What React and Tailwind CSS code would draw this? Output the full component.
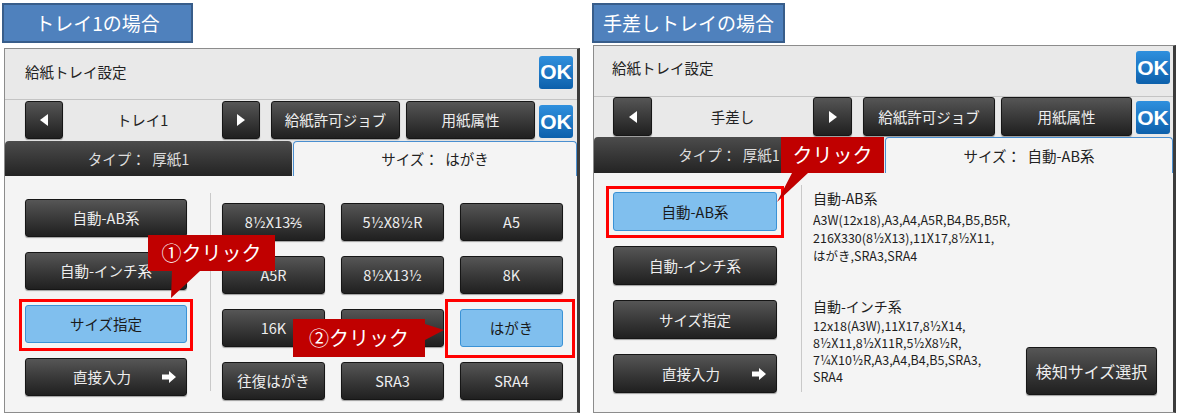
import React from "react";

const dark =
  "flex items-center justify-center rounded-[3px] border border-[#161616] bg-linear-to-b from-[#565656] to-[#202020] text-[#eeeeee] shadow-[0_1px_1px_rgba(0,0,0,0.35)]";
const picked =
  "flex items-center justify-center rounded-[3px] border border-[#3a92d6] bg-[#80bfee] text-[#1a1a1a]";
const okBtn =
  "flex items-center justify-center rounded-[3px] bg-linear-to-b from-[#2f90de] to-[#0c60ab] font-['Liberation_Sans',sans-serif] text-[21px] font-bold text-white";
const label =
  "flex h-[40px] items-center justify-center border-2 border-[#385d8a] bg-[#4f81bd] text-[19px] text-white";

const Tri = ({ dir }) => (
  <svg width="8" height="12" viewBox="0 0 8 12">
    <polygon points={dir === "l" ? "8,0 8,12 0,6" : "0,0 0,12 8,6"} fill="#ffffff" />
  </svg>
);

const Arrow = () => (
  <svg width="14" height="12" viewBox="0 0 14 12">
    <polygon points="0,3.5 7,3.5 7,0 14,6 7,12 7,8.5 0,8.5" fill="#ffffff" />
  </svg>
);

const gridItems = [
  "8½X13⅖", "5½X8½R", "A5",
  "A5R", "8½X13½", "8K",
  "16K", "", "はがき",
  "往復はがき", "SRA3", "SRA4",
];

const Callout = ({ className, w, h, points, text, textClass }) => (
  <div className={`absolute ${className}`}>
    <svg width={w} height={h} viewBox={`0 0 ${w} ${h}`} className="absolute left-0 top-0">
      <polygon points={points} fill="#c00000" />
    </svg>
    <span className={`absolute text-[20px] text-white ${textClass}`}>{text}</span>
  </div>
);

const TrayPanel = () => (
  <div className="ml-[2px] mt-[5px] flex h-[365px] w-[576px] flex-col border border-[#8c8c8c] border-r-[3px] border-r-[#3c3c3c] bg-[#e9e9e9]">
    <div className="flex h-[51px] items-center justify-between border-b border-[#c4c4c4] pb-[4px] pl-[20px] pr-[4px]">
      <span className="text-[14.5px] text-[#222]">給紙トレイ設定</span>
      <div className={`${okBtn} h-[33px] w-[34px]`}>OK</div>
    </div>
    <div className="flex h-[41px] items-start pl-[20px] pt-[1px] text-[14.5px]">
      <div className={`${dark} h-[38px] w-[38px]`}><Tri dir="l" /></div>
      <div className="flex h-[38px] w-[159px] items-center justify-center text-[#222]">トレイ1</div>
      <div className={`${dark} h-[38px] w-[38px]`}><Tri dir="r" /></div>
      <div className={`${dark} ml-[11px] h-[38px] w-[129px]`}>給紙許可ジョブ</div>
      <div className={`${dark} ml-[6px] h-[38px] w-[129px]`}>用紙属性</div>
      <div className={`${okBtn} ml-[4px] mt-[4px] h-[33px] w-[34px]`}>OK</div>
    </div>
    <div className="flex h-[35px] items-end text-[14.5px]">
      <div className="flex h-[35px] w-[287px] items-center justify-center rounded-t-[4px] bg-linear-to-b from-[#4c4c4c] to-[#242424] pr-[20px] text-[#dddddd]">
        タイプ：&nbsp;&nbsp;厚紙1
      </div>
      <div className="ml-[1px] flex h-[35px] flex-1 items-center justify-center rounded-t-[4px] border border-b-0 border-[#4a8fd0] bg-[#f4f4f4] text-[#222]">
        サイズ：&nbsp;&nbsp;はがき
      </div>
    </div>
    <div className="flex flex-1 bg-[#f4f4f4] text-[14.5px]">
      <div className="flex flex-col gap-[15px] pl-[20px] pt-[23px]">
        <div className={`${dark} h-[38px] w-[162px]`}>自動-AB系</div>
        <div className={`${dark} h-[38px] w-[162px]`}>自動-インチ系</div>
        <div className={`${picked} h-[38px] w-[162px]`}>サイズ指定</div>
        <div className={`${dark} h-[38px] w-[162px] pl-[16px] pr-[10px]`}>
          <span className="flex-1 text-center">直接入力</span>
          <Arrow />
        </div>
      </div>
      <div className="ml-[23px] mt-[17px] h-[198px] w-px bg-[#c9c9c9]" />
      <div className="ml-[11px] mt-[27px] grid h-fit grid-cols-[103px_103px_103px] gap-x-[16px] gap-y-[15px]">
        {gridItems.map((t, i) => (
          <div key={i} className={`${t === "はがき" ? picked : dark} h-[38px]`}>{t}</div>
        ))}
      </div>
    </div>
  </div>
);

const BypassPanel = () => (
  <div className="ml-[3px] mt-[2px] flex h-[368px] w-[583px] flex-col border border-[#8c8c8c] border-r-[3px] border-r-[#3c3c3c] bg-[#e9e9e9]">
    <div className="flex h-[51px] items-center justify-between border-b border-[#c4c4c4] pb-[7px] pl-[18px] pr-[3px]">
      <span className="text-[14.5px] text-[#222]">給紙トレイ設定</span>
      <div className={`${okBtn} h-[33px] w-[34px]`}>OK</div>
    </div>
    <div className="flex h-[40px] items-start pl-[19px] text-[14.5px]">
      <div className={`${dark} h-[39px] w-[39px]`}><Tri dir="l" /></div>
      <div className="flex h-[39px] w-[161px] items-center justify-center text-[#222]">手差し</div>
      <div className={`${dark} h-[39px] w-[39px]`}><Tri dir="r" /></div>
      <div className={`${dark} ml-[11px] h-[39px] w-[132px]`}>給紙許可ジョブ</div>
      <div className={`${dark} ml-[6px] h-[39px] w-[131px]`}>用紙属性</div>
      <div className={`${okBtn} ml-[4px] mt-[4px] h-[33px] w-[34px]`}>OK</div>
    </div>
    <div className="flex h-[36px] items-end text-[14.5px]">
      <div className="flex h-[36px] w-[290px] items-center justify-center rounded-t-[4px] bg-linear-to-b from-[#4c4c4c] to-[#242424] pr-[20px] text-[#dddddd]">
        タイプ：&nbsp;&nbsp;厚紙1
      </div>
      <div className="ml-[1px] flex h-[36px] flex-1 items-center justify-center rounded-t-[4px] border border-b-0 border-[#4a8fd0] bg-[#f4f4f4] text-[#222]">
        サイズ：&nbsp;&nbsp;自動-AB系
      </div>
    </div>
    <div className="flex flex-1 bg-[#f4f4f4] text-[14.5px]">
      <div className="flex flex-col gap-[15px] pl-[19px] pt-[19px]">
        <div className={`${picked} h-[39px] w-[164px]`}>自動-AB系</div>
        <div className={`${dark} h-[39px] w-[164px]`}>自動-インチ系</div>
        <div className={`${dark} h-[39px] w-[164px]`}>サイズ指定</div>
        <div className={`${dark} h-[39px] w-[164px] pl-[16px] pr-[10px]`}>
          <span className="flex-1 text-center">直接入力</span>
          <Arrow />
        </div>
      </div>
      <div className="ml-[24px] mt-[12px] h-[207px] w-px bg-[#c9c9c9]" />
      <div className="ml-[11px] flex flex-1 flex-col pt-[16px] text-[#1e1e1e]">
        <div className="text-[14px] leading-[18px]">自動-AB系</div>
        <div className="mt-[4px] text-[12.5px] leading-[18px]">
          <div>A3W(12x18),A3,A4,A5R,B4,B5,B5R,</div>
          <div>216X330(8½X13),11X17,8½X11,</div>
          <div>はがき,SRA3,SRA4</div>
        </div>
        <div className="mt-[32px] flex">
          <div>
            <div className="text-[14px] leading-[18px]">自動-インチ系</div>
            <div className="mt-[2px] text-[12.5px] leading-[17px]">
              <div>12x18(A3W),11X17,8½X14,</div>
              <div>8½X11,8½X11R,5½X8½R,</div>
              <div>7¼X10½R,A3,A4,B4,B5,SRA3,</div>
              <div>SRA4</div>
            </div>
          </div>
          <div className={`${dark} ml-auto mr-[16px] mt-[50px] h-[48px] w-[131px] text-[16px]`}>検知サイズ選択</div>
        </div>
      </div>
    </div>
  </div>
);

export default function App() {
  return (
    <div className="relative h-[420px] w-[1186px] overflow-hidden bg-white font-['Noto_Sans_CJK_JP',sans-serif]">
      <div className="flex">
        <div className="w-[590px] pl-[2px] pt-[3px]">
          <div className={`${label} w-[191px]`}>トレイ1の場合</div>
          <TrayPanel />
        </div>
        <div className="w-[596px] pt-[3px]">
          <div className={`${label} ml-[2px] w-[193px]`}>手差しトレイの場合</div>
          <BypassPanel />
        </div>
      </div>

      <div className="absolute left-[19px] top-[299px] h-[52px] w-[174px] border-[3px] border-[#ff0000]" />
      <div className="absolute left-[445px] top-[299px] h-[59px] w-[130px] border-[3px] border-[#ff0000]" />
      <div className="absolute left-[606px] top-[186px] h-[52px] w-[178px] border-[3px] border-[#ff0000]" />

      <Callout
        className="left-[148px] top-[235px] h-[64px] w-[127px]"
        w={127}
        h={64}
        points="0,0 127,0 127,36 52,36 23,63 24,36 0,36"
        text="①クリック"
        textClass="left-0 top-0 flex h-[36px] w-[127px] items-center justify-center"
      />
      <Callout
        className="left-[293px] top-[319px] h-[38px] w-[152px]"
        w={152}
        h={38}
        points="0,0 132,0 132,5 151,11 132,21 132,38 0,38"
        text="②クリック"
        textClass="left-0 top-0 flex h-[38px] w-[132px] items-center justify-center"
      />
      <Callout
        className="left-[777px] top-[137px] h-[66px] w-[107px]"
        w={107}
        h={66}
        points="4,0 107,0 107,36 31,36 0,65 15,36 4,36"
        text="クリック"
        textClass="left-[4px] top-0 flex h-[36px] w-[103px] items-center justify-center"
      />
    </div>
  );
}
